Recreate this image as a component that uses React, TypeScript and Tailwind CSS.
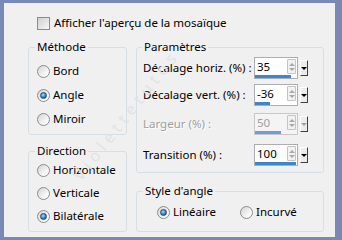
import React from "react";

type Row = { label: string; value: string; bar: number; disabled?: boolean; mt: string };

const rows: Row[] = [
  { label: "Décalage horiz. (%) :", value: "35", bar: 36, mt: "mt-[3px]" },
  { label: "Décalage vert. (%) :", value: "-36", bar: 15, mt: "mt-[5px]" },
  { label: "Largeur (%) :", value: "50", bar: 26, disabled: true, mt: "mt-[7px]" },
  { label: "Transition (%) :", value: "100", bar: 41, mt: "mt-[9px]" },
];

function Radio({ checked }: { checked?: boolean }) {
  return (
    <span className="flex h-[13px] w-[13px] shrink-0 items-center justify-center rounded-full border border-[#8c8c8c] bg-[linear-gradient(135deg,#d4d4d4,#f8f8f8_70%,#ffffff)]">
      {checked && (
        <span className="h-[7px] w-[7px] rounded-full border border-[#1b4a70] bg-[radial-gradient(circle_at_40%_35%,#a6dcff,#2f86c6_55%,#0c3a62)]" />
      )}
    </span>
  );
}

function RadioRow({ label, checked }: { label: string; checked?: boolean }) {
  return (
    <div className="flex h-[14px] items-center gap-[3px] whitespace-nowrap">
      <Radio checked={checked} />
      <span>{label}</span>
    </div>
  );
}

function Spinner({ value, bar, disabled }: { value: string; bar: number; disabled?: boolean }) {
  return (
    <div className="flex h-[22px] items-center">
      <div
        className={`flex h-[22px] w-[44px] flex-col border ${
          disabled ? "border-[#c8c8c8] bg-[#f4f4f4]" : "border-[#abadb3] bg-white"
        }`}
      >
        <div className="flex flex-1 items-center pl-[2px] pr-[1px]">
          <span className={`flex-1 ${disabled ? "text-[#a0a0a0]" : "text-black"}`}>{value}</span>
          <div className="flex h-[15px] w-[9px] flex-col items-center justify-center gap-[2px] rounded-[1px] border border-[#c4c4c4] bg-[#f2f2f2]">
            <span className="h-0 w-0 border-x-[3px] border-b-[3px] border-x-transparent border-b-[#a8a8a8]" />
            <span className="h-0 w-0 border-x-[3px] border-t-[3px] border-x-transparent border-t-[#a8a8a8]" />
          </div>
        </div>
        <div className="h-[3px]">
          <div className={`h-[3px] ${disabled ? "bg-[#6a9fd6]" : "bg-[#3d86cc]"}`} style={{ width: bar }} />
        </div>
      </div>
      <div className="ml-[2px] flex h-[16px] w-[8px] items-center justify-center border border-b-[#404040] border-l-white border-r-[#404040] border-t-white bg-[#ececec]">
        <span
          className={`h-0 w-0 border-x-[3px] border-t-[3px] border-x-transparent ${
            disabled ? "border-t-[#a0a0a0]" : "border-t-black"
          }`}
        />
      </div>
    </div>
  );
}

export default function App() {
  return (
    <div className="h-[240px] w-[342px] bg-[#7b87b5] pb-[3px] pl-[4px] pr-[7px] pt-[3px] font-['Noto_Sans',sans-serif] text-[11.5px] leading-[14px] text-black">
      <div className="relative flex h-full flex-col overflow-hidden bg-[#f0f0f0] pl-[24px] pt-[13px]">
        {/* Checkbox row */}
        <div className="ml-[9px] flex h-[14px] items-center gap-[4px] whitespace-nowrap">
          <span className="h-[13px] w-[13px] border border-[#8c8c8c] bg-[linear-gradient(135deg,#d0d0d0,#f6f6f6)]" />
          <span>Afficher l'aperçu de la mosaïque</span>
        </div>

        <div className="mt-[10px] flex gap-[9px]">
          {/* Left column */}
          <div className="flex w-[99px] flex-col gap-[9px]">
            <fieldset className="h-[95px] rounded-[3px] border border-[#d5dfe5] pl-[6px]">
              <legend className="px-[2px]">Méthode</legend>
              <div className="ml-[2px] mt-[10px] flex flex-col gap-[10px]">
                <RadioRow label="Bord" />
                <RadioRow label="Angle" checked />
                <RadioRow label="Miroir" />
              </div>
            </fieldset>
            <fieldset className="h-[88px] rounded-[3px] border border-[#d5dfe5] pl-[6px]">
              <legend className="px-[2px]">Direction</legend>
              <div className="ml-[2px] mt-[5px] flex flex-col gap-[9px]">
                <RadioRow label="Horizontale" />
                <RadioRow label="Verticale" />
                <RadioRow label="Bilatérale" checked />
              </div>
            </fieldset>
          </div>

          {/* Right column */}
          <div className="flex w-[188px] flex-col gap-[11px]">
            <fieldset className="h-[133px] rounded-[3px] border border-[#d5dfe5] pl-[5px]">
              <legend className="px-[2px]">Paramètres</legend>
              {rows.map((r) => (
                <div key={r.label} className={`flex items-center ${r.mt}`}>
                  <span
                    className={`ml-[1px] w-[111px] whitespace-nowrap ${
                      r.disabled ? "text-[#a0a0a0] [text-shadow:1px_1px_0_#ffffff]" : ""
                    }`}
                  >
                    {r.label}
                  </span>
                  <Spinner value={r.value} bar={r.bar} disabled={r.disabled} />
                </div>
              ))}
            </fieldset>
            <fieldset className="h-[48px] rounded-[3px] border border-[#d5dfe5] pl-[6px]">
              <legend className="px-[2px]">Style d'angle</legend>
              <div className="ml-[14px] mt-[7px] flex">
                <div className="w-[83px]">
                  <RadioRow label="Linéaire" checked />
                </div>
                <RadioRow label="Incurvé" />
              </div>
            </fieldset>
          </div>
        </div>

        {/* Watermark */}
        <span className="pointer-events-none absolute left-[122px] top-[112px] -translate-x-1/2 -translate-y-1/2 -rotate-[52deg] whitespace-nowrap text-[16px] tracking-[5px] text-[#e3e3e3]">
          Violettetutos
        </span>
      </div>
    </div>
  );
}
